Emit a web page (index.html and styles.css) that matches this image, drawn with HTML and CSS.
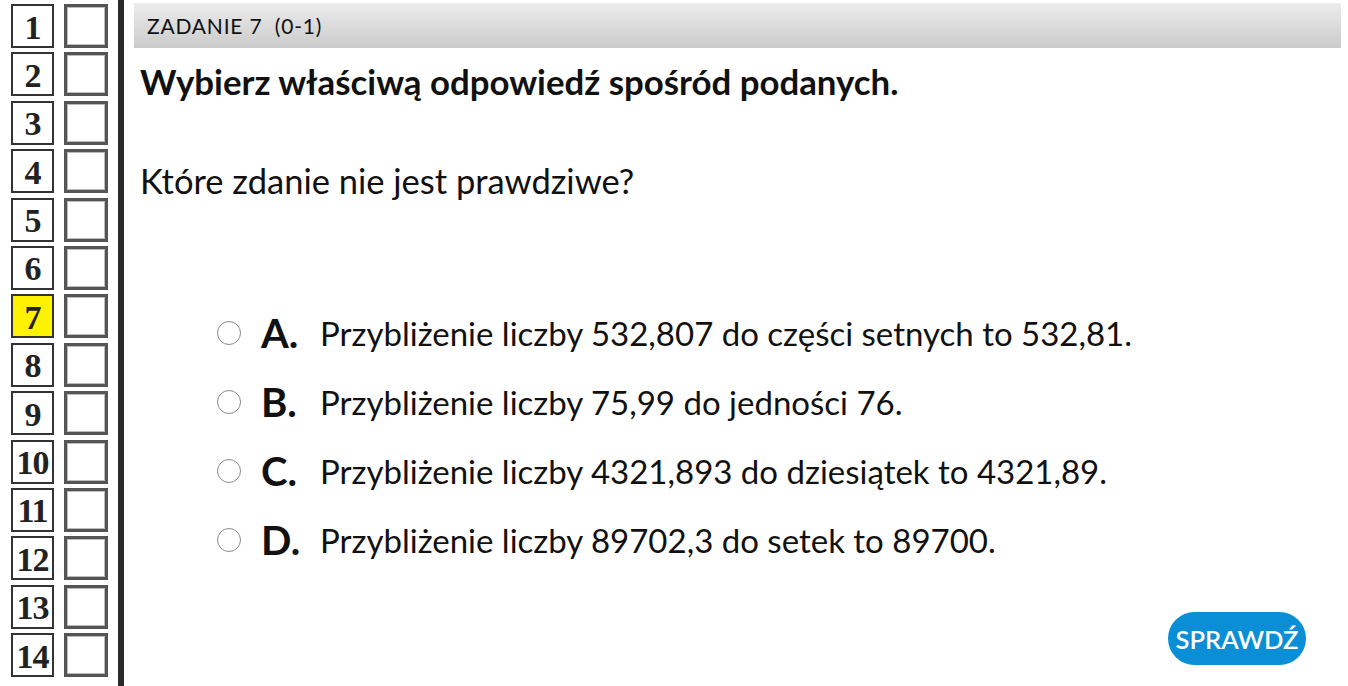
FILE: index.html
```html
<!DOCTYPE html>
<html>
<head>
	<meta charset="utf-8">
	<title>Zadanie 7</title>
	<link rel="stylesheet" href="styles.css">
</head>
<body>
	<div class="page">
		<div class="nav">
			<div class="nav-row"><span class="num">1</span><span class="mark"></span></div>
			<div class="nav-row"><span class="num">2</span><span class="mark"></span></div>
			<div class="nav-row"><span class="num">3</span><span class="mark"></span></div>
			<div class="nav-row"><span class="num">4</span><span class="mark"></span></div>
			<div class="nav-row"><span class="num">5</span><span class="mark"></span></div>
			<div class="nav-row"><span class="num">6</span><span class="mark"></span></div>
			<div class="nav-row"><span class="num active">7</span><span class="mark"></span></div>
			<div class="nav-row"><span class="num">8</span><span class="mark"></span></div>
			<div class="nav-row"><span class="num">9</span><span class="mark"></span></div>
			<div class="nav-row"><span class="num">10</span><span class="mark"></span></div>
			<div class="nav-row"><span class="num">11</span><span class="mark"></span></div>
			<div class="nav-row"><span class="num">12</span><span class="mark"></span></div>
			<div class="nav-row"><span class="num">13</span><span class="mark"></span></div>
			<div class="nav-row"><span class="num">14</span><span class="mark"></span></div>
		</div>
		<div class="divider"></div>
		<div class="task">
			<div class="task-header">ZADANIE 7&nbsp; (0-1)</div>
			<h1 class="instruction">Wybierz właściwą odpowiedź spośród podanych.</h1>
			<p class="question">Które zdanie nie jest prawdziwe?</p>

			<ul class="answers">
				<li class="answer"><span class="radio"></span><span class="letter">A.</span><span class="text">Przybliżenie liczby 532,807 do części setnych to 532,81.</span></li>
				<li class="answer"><span class="radio"></span><span class="letter">B.</span><span class="text">Przybliżenie liczby 75,99 do jedności 76.</span></li>
				<li class="answer"><span class="radio"></span><span class="letter">C.</span><span class="text">Przybliżenie liczby 4321,893 do dziesiątek to 4321,89.</span></li>
				<li class="answer"><span class="radio"></span><span class="letter">D.</span><span class="text">Przybliżenie liczby 89702,3 do setek to 89700.</span></li>
			</ul>

			<div class="actions">
				<button class="check">SPRAWDŹ</button>
			</div>
		</div>
	</div>
</body>
</html>
```

FILE: styles.css
```css
*{
	padding: 0;
	margin: 0;
	box-sizing: border-box;
}
body{
	background: #ffffff;
	font-family: "Lato", "Liberation Sans", sans-serif;
	color: #111111;
	overflow: hidden;
}
.page{
	display: flex;
	height: 686px;
}
/* left list of tasks */
.nav{
	display: flex;
	flex-direction: column;
	gap: 4.4px;
	padding: 4px 0 0 11px;
	width: 118px;
}
.nav-row{
	display: flex;
	gap: 10px;
}
.num{
	width: 43px;
	height: 44px;
	border: 2px solid #333333;
	display: flex;
	align-items: center;
	justify-content: center;
	font-family: "Liberation Serif", serif;
	font-weight: bold;
	font-size: 34px;
	letter-spacing: -1px;
	line-height: 1;
	padding-top: 3px;
	color: #222222;
}
.num.active{
	background: #fff200;
}
.mark{
	width: 44px;
	height: 44px;
	border: 3px solid #555555;
	box-shadow: inset 0 0 0 1px #bbbbbb;
}
.divider{
	width: 6px;
	background: #2a2a2a;
	height: 100%;
}
/* task content */
.task{
	flex: 1;
	padding: 3px 7px 0 10px;
	display: flex;
	flex-direction: column;
}
.task-header{
	height: 45px;
	background: linear-gradient(#ececec, #cbcbcb);
	font-size: 21px;
	letter-spacing: 0.8px;
	line-height: 45px;
	padding-left: 13px;
	color: #111111;
}
.instruction{
	font-size: 34.8px;
	font-weight: bold;
	margin: 17px 0 0 6px;
	line-height: 34px;
}
.question{
	font-size: 34.5px;
	margin: 65px 0 0 6px;
	line-height: 34px;
}
.answers{
	list-style: none;
	margin: 115px 0 0 83px;
	display: flex;
	flex-direction: column;
	gap: 29px;
}
.answer{
	display: flex;
	align-items: center;
	height: 40px;
	font-size: 33px;
}
.radio{
	width: 24px;
	height: 24px;
	border: 1px solid #8a8a8a;
	border-radius: 50%;
	margin-right: 20px;
}
.letter{
	font-weight: bold;
	width: 59px;
	font-size: 40px;
}
.actions{
	display: flex;
	justify-content: flex-end;
	margin-top: auto;
	padding: 0 35px 21px 0;
}
.check{
	background: #0a8fd6;
	color: #ffffff;
	border: none;
	border-radius: 27px;
	width: 138px;
	height: 53px;
	font-family: "Lato", sans-serif;
	font-size: 25.5px;
	font-weight: 600;
}
```
